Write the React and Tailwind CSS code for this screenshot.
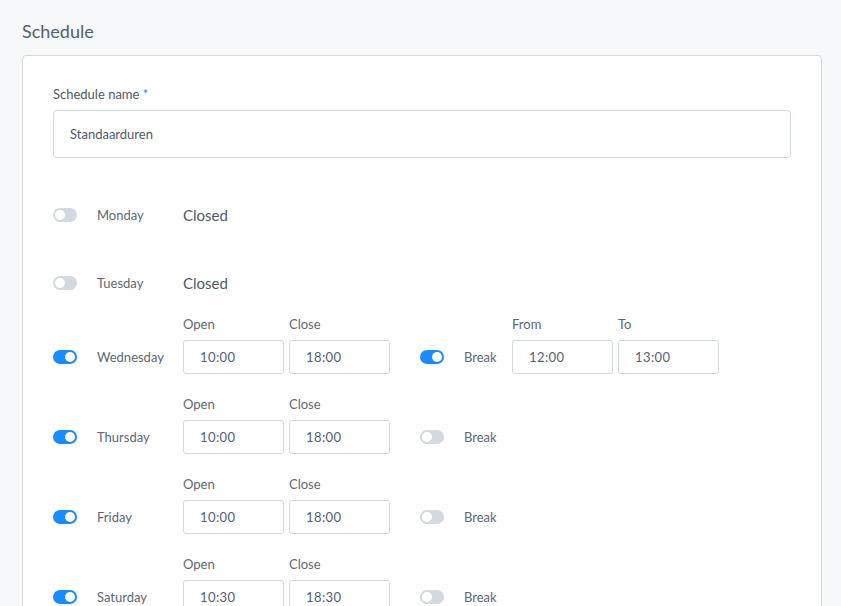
import React from "react";

const Toggle = ({on}) => (
    <div className={`relative h-[14px] w-[24px] shrink-0 rounded-full ${on ? "bg-[#1a8cff]" : "bg-[#d3d9e0]"}`}>
        <div className={`absolute top-[2px] h-[10px] w-[10px] rounded-full bg-white ${on ? "left-[12px]" : "left-[2px]"}`}/>
    </div>
);

const TimeField = ({label, value}) => (
    <div className="flex flex-col">
        <span className="mb-[8px] h-[16px] text-[13px] leading-[16px] text-[#5c6878]">{label}</span>
        <div className="flex h-[34px] w-[101px] items-center rounded-[3px] border border-[#d3d9e0] bg-white px-[16px] pt-[2px] text-[13px] tracking-[0.4px] text-[#52607a]">
            {value}
        </div>
    </div>
);

const ClosedRow = ({day, className}) => (
    <div className={`flex h-[34px] items-center ${className}`}>
        <Toggle on={false}/>
        <span className="ml-[20px] mt-[2px] w-[86px] text-[13px] text-[#5c6878]">{day}</span>
        <span className="text-[15px] text-[#4d5a6c]">Closed</span>
    </div>
);

const OpenRow = ({day, open, close, brk, className}) => (
    <div className={`flex items-end ${className}`}>
        <div className="flex h-[34px] items-center">
            <Toggle on/>
            <span className="ml-[20px] mt-[2px] w-[86px] text-[13px] text-[#5c6878]">{day}</span>
        </div>
        <div className="flex gap-[5px]">
            <TimeField label="Open" value={open}/>
            <TimeField label="Close" value={close}/>
        </div>
        <div className="ml-[30px] flex h-[34px] items-center">
            <Toggle on={!!brk}/>
            <span className="ml-[20px] mt-[2px] w-[48px] text-[13px] text-[#5c6878]">Break</span>
        </div>
        {brk && (
            <div className="flex gap-[5px]">
                <TimeField label="From" value={brk[0]}/>
                <TimeField label="To" value={brk[1]}/>
            </div>
        )}
    </div>
);

export default function App() {
    return (
        <div className="h-[606px] overflow-hidden bg-[#f7f8fa] px-[22px] pt-[20px] font-['Lato',sans-serif]">
            <h2 className="mb-[13px] text-[18px] leading-[22px] text-[#52606f]">Schedule</h2>
            <div className="w-[800px] rounded-[4px] border border-[#d3d9e0] bg-white px-[30px] pt-[30px] pb-[40px]">
                <label className="block text-[13px] leading-[16px] text-[#4d5a6c]">
                    Schedule name <span className="text-[#1a8cff]">*</span>
                </label>
                <div className="mt-[8px] flex h-[48px] items-center rounded-[4px] border border-[#d3d9e0] px-[16px] pt-[2px] text-[13px] text-[#4d5a6c]">
                    Standaarduren
                </div>

                <ClosedRow day="Monday" className="mt-[40px]"/>
                <ClosedRow day="Tuesday" className="mt-[34px]"/>
                <OpenRow day="Wednesday" open="10:00" close="18:00" brk={["12:00", "13:00"]} className="mt-[16px]"/>
                <OpenRow day="Thursday" open="10:00" close="18:00" className="mt-[22px]"/>
                <OpenRow day="Friday" open="10:00" close="18:00" className="mt-[22px]"/>
                <OpenRow day="Saturday" open="10:30" close="18:30" className="mt-[22px]"/>
            </div>
        </div>
    );
}
